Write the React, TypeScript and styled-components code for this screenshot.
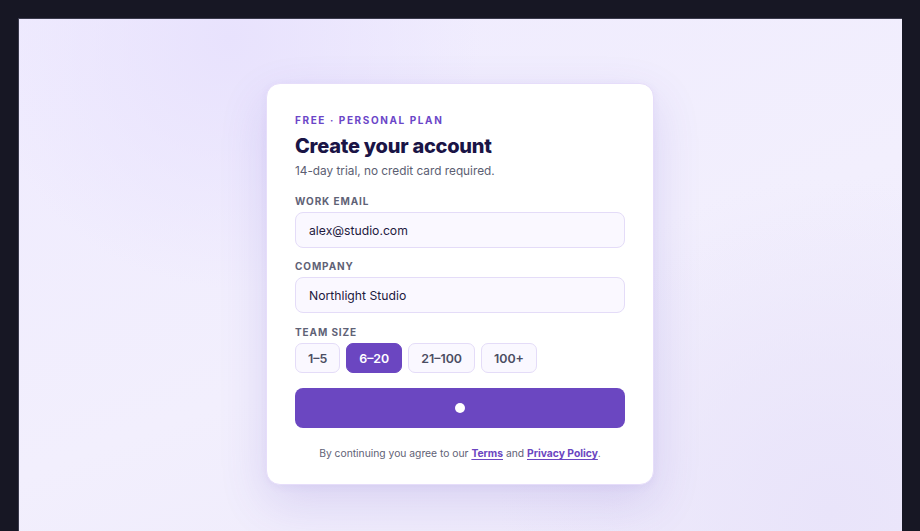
import React from "react";
import styled, { createGlobalStyle } from "styled-components";

const GlobalStyle = createGlobalStyle`
  html, body {
    margin: 0;
    padding: 0;
    height: 100%;
    background: #171724;
  }
  #root {
    height: 100%;
  }
  * {
    box-sizing: border-box;
  }
`;

const Frame = styled.div`
  height: 100vh;
  padding: 18px 18px 0;
  background: #171724;
  font-family: Inter, "Noto Sans", sans-serif;
`;

const Stage = styled.div`
  height: 100%;
  display: flex;
  justify-content: center;
  align-items: flex-start;
  padding-top: 65px;
  box-shadow: inset 1px 1px 0 #3a3a4c;
  background:
    radial-gradient(circle at 24% 4%, #e8e2fd 0%, rgba(232, 226, 253, 0) 30%),
    radial-gradient(circle at 92% 96%, #e9e4fa 0%, rgba(233, 228, 250, 0) 35%),
    linear-gradient(160deg, #efebfe 0%, #f2effd 55%, #eeeafb 100%);
`;

const Card = styled.div`
  width: 388px;
  display: flex;
  flex-direction: column;
  padding: 29px 28px 24px;
  background: #ffffff;
  border: 1px solid #e6ddfa;
  border-radius: 14px;
  box-shadow: 0 18px 48px rgba(96, 70, 190, 0.16), 0 2px 8px rgba(96, 70, 190, 0.06);
`;

const Eyebrow = styled.div`
  font-size: 10px;
  line-height: 14px;
  font-weight: 700;
  letter-spacing: 1.6px;
  color: #6b46c8;
  text-transform: uppercase;
`;

const Title = styled.h1`
  margin: 5px 0 0;
  font-size: 20px;
  line-height: 28px;
  font-weight: 800;
  letter-spacing: -0.25px;
  color: #1a1446;
`;

const Subtitle = styled.p`
  margin: 2px 0 0;
  font-size: 11.8px;
  line-height: 18px;
  color: #5b5e72;
`;

const Field = styled.div<{ $top: number }>`
  display: flex;
  flex-direction: column;
  gap: 4px;
  margin-top: ${(p) => p.$top}px;
`;

const Label = styled.label`
  font-size: 10px;
  line-height: 14px;
  font-weight: 700;
  letter-spacing: 0.9px;
  color: #5f6276;
  text-transform: uppercase;
`;

const Input = styled.input`
  height: 36px;
  width: 100%;
  padding: 0 13px;
  font-family: Inter, "Noto Sans", sans-serif;
  font-size: 12.2px;
  color: #1e1a40;
  background: #faf8ff;
  border: 1px solid #e4dcf8;
  border-radius: 8px;
  outline: none;
`;

const Chips = styled.div`
  display: flex;
  gap: 6px;
`;

const Chip = styled.button<{ $active?: boolean }>`
  height: 30px;
  padding: 0 12px;
  font-family: Inter, "Noto Sans", sans-serif;
  font-size: 12.4px;
  font-weight: 600;
  color: ${(p) => (p.$active ? "#ffffff" : "#4b4d62")};
  background: ${(p) => (p.$active ? "#6b46c1" : "#faf8ff")};
  border: 1px solid ${(p) => (p.$active ? "#6b46c1" : "#e4dcf8")};
  border-radius: 7px;
  cursor: pointer;
`;

const Submit = styled.button`
  margin-top: 15px;
  height: 40px;
  width: 100%;
  display: flex;
  align-items: center;
  justify-content: center;
  background: #6b47c1;
  border: none;
  border-radius: 8px;
  cursor: pointer;
`;

const Dot = styled.span`
  width: 10px;
  height: 10px;
  border-radius: 50%;
  background: #ffffff;
`;

const Footer = styled.p`
  margin: 18px 0 0;
  text-align: center;
  font-size: 10.3px;
  line-height: 14px;
  color: #5f6276;
`;

const Link = styled.a`
  color: #6b46c1;
  font-weight: 700;
  text-decoration: underline;
  text-underline-offset: 2px;
`;

const sizes = ["1–5", "6–20", "21–100", "100+"];

const App: React.FC = () => {
  return (
    <>
      <GlobalStyle />
      <Frame>
        <Stage>
          <Card>
            <Eyebrow>Free · Personal plan</Eyebrow>
            <Title>Create your account</Title>
            <Subtitle>14-day trial, no credit card required.</Subtitle>

            <Field $top={14}>
              <Label>Work email</Label>
              <Input defaultValue="alex@studio.com" />
            </Field>

            <Field $top={11}>
              <Label>Company</Label>
              <Input defaultValue="Northlight Studio" />
            </Field>

            <Field $top={12}>
              <Label>Team size</Label>
              <Chips>
                {sizes.map((s) => (
                  <Chip key={s} $active={s === "6–20"}>
                    {s}
                  </Chip>
                ))}
              </Chips>
            </Field>

            <Submit>
              <Dot />
            </Submit>

            <Footer>
              By continuing you agree to our <Link href="#">Terms</Link> and{" "}
              <Link href="#">Privacy Policy</Link>.
            </Footer>
          </Card>
        </Stage>
      </Frame>
    </>
  );
};

export default App;
